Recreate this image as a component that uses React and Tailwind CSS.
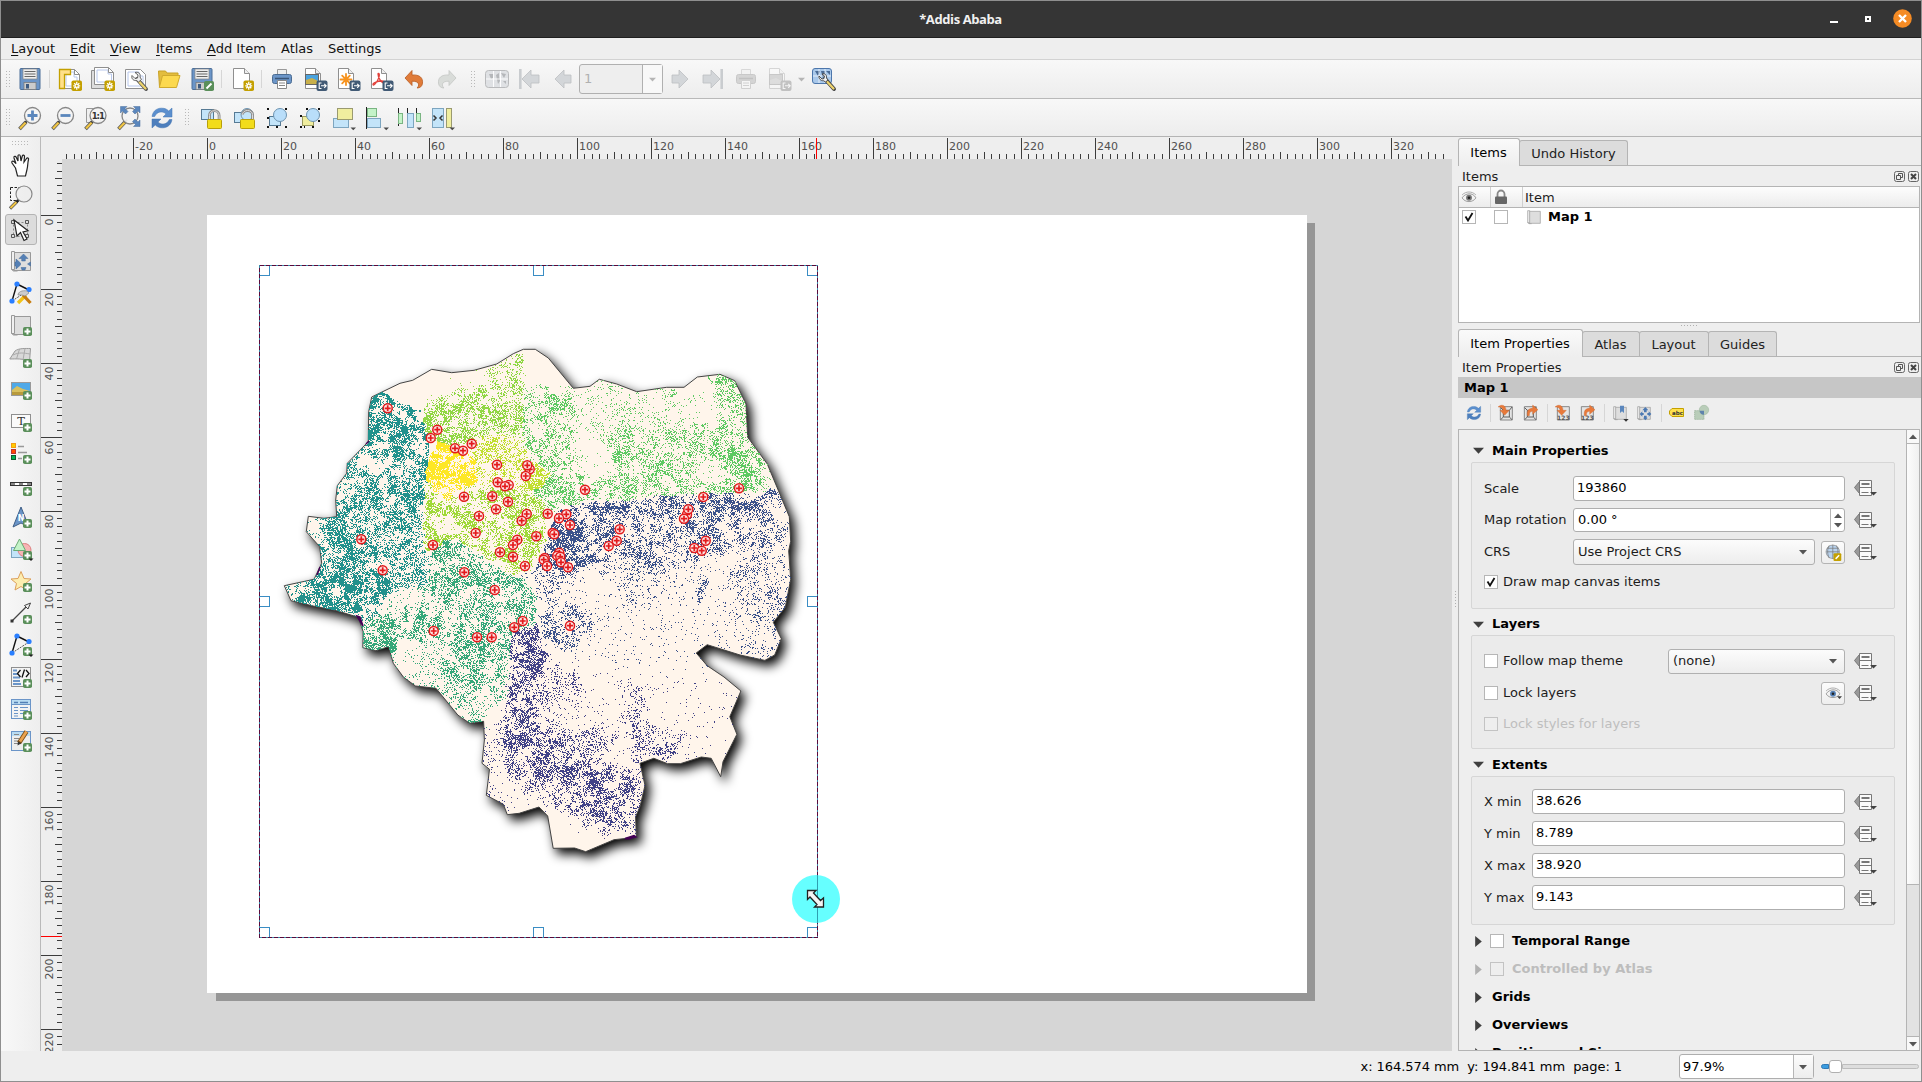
import React from "react";

/* ------------------------------------------------------------------ */
/* Map data                                                            */
/* ------------------------------------------------------------------ */

const OUTLINE = [
  [371.7, 397], [400, 383.3], [412.7, 380.3], [431.7, 369.3], [451.7, 372.7], [474, 370.3], [496.7, 364],
  [513.3, 353.7], [523.3, 349.3], [535.3, 349.3], [548.3, 358], [573.3, 388.3], [590, 386.3], [599.3, 379.3],
  [616.7, 384], [636.7, 391.7], [666.7, 387.3], [684, 387.3], [697.3, 377], [720, 374.3], [734.7, 380.7],
  [746, 404], [747.7, 437.3], [767.3, 464], [789.3, 516.7], [790.7, 541.3], [788.7, 550.7], [790.7, 579.3],
  [785.3, 607.3], [773.3, 622.3], [781.3, 638.7], [774.7, 655], [764.8, 660.4], [740, 655], [707.2, 644.7],
  [696.2, 653], [707.2, 665.7], [724, 677], [740.9, 691], [729.8, 716.7], [736.9, 734.3], [723, 761.7],
  [720.7, 776.7], [711.2, 758.3], [701.3, 757], [680.3, 763.7], [667.6, 763.7], [653.8, 758.3], [640, 763.3],
  [645, 785.3], [640, 806.7], [635.6, 816.7], [636.4, 837.3], [614, 839.7], [585.7, 851.7], [574.6, 848],
  [553.2, 848.3], [547.7, 816], [539, 807], [519.2, 813.3], [507.3, 814.7], [503.4, 804.3], [486.3, 795.3],
  [489.5, 769.3], [482, 763.3], [484.4, 740], [483.6, 721.3], [469.7, 723.3], [457.8, 715], [436, 688.3],
  [415.5, 686], [403.6, 677.3], [393.3, 663.3], [388.6, 646.7], [375.9, 650.7], [362.8, 647.7], [363.2, 631.7],
  [358.3, 617.3], [336.7, 610.7], [313.3, 606], [291, 600.7], [284.3, 585.7], [314, 579.3], [321.7, 563.3],
  [319.7, 546.7], [306.3, 531.7], [308.3, 516.3], [324, 518.3], [336.7, 516.7], [335.7, 500], [337.3, 485.7],
  [346.7, 473.3], [347.3, 463.3], [368.3, 441.7], [368.7, 411.7],
];

/* Each region: colour, boundary, and density blobs [cx, cy, rx, ry, density]. */
const REGIONS = [
  {
    color: "#fde725",
    poly: [[437, 440], [452, 444], [468, 452], [478, 470], [474, 484], [462, 492], [446, 500], [432, 490], [425, 474], [430, 455]],
    blobs: [[450, 468, 36, 38, 0.8]],
  },
  {
    color: "#c0df2f",
    poly: [[468, 440], [495, 432], [520, 440], [530, 462], [550, 472], [540, 488], [522, 492], [498, 482], [478, 484], [470, 455]],
    blobs: [[500, 462, 60, 34, 0.42], [535, 474, 20, 16, 0.6]],
  },
  {
    color: "#90d743",
    poly: [[424, 412], [440, 365], [500, 350], [523, 345], [523, 432], [528, 455], [520, 445], [495, 434], [470, 440], [452, 446], [436, 440], [424, 432]],
    blobs: [[445, 424, 38, 28, 0.58], [480, 419, 42, 30, 0.5], [510, 408, 26, 40, 0.48], [520, 360, 5, 9, 0.4]],
  },
  {
    color: "#9fd938",
    poly: [[424, 478], [446, 498], [474, 484], [522, 490], [546, 502], [543, 548], [527, 572], [512, 574], [492, 562], [470, 545], [445, 540], [432, 550], [422, 548]],
    blobs: [[438, 520, 26, 40, 0.58], [500, 525, 60, 45, 0.5], [470, 505, 35, 25, 0.42], [525, 555, 25, 25, 0.45]],
    holes: [[449, 526, 14, 10]],
  },
  {
    color: "#21918c",
    poly: [[345, 385], [378, 390], [400, 400], [424, 418], [430, 445], [426, 470], [431, 495], [421, 500], [422, 548], [431, 555], [426, 585], [388, 594], [378, 615], [352, 626], [270, 610], [270, 500]],
    blobs: [[378, 412, 26, 40, 0.75], [412, 440, 26, 45, 0.7], [400, 470, 44, 55, 0.55], [360, 490, 30, 50, 0.38], [350, 540, 34, 50, 0.58], [400, 530, 45, 50, 0.42], [345, 590, 50, 30, 0.75], [385, 570, 55, 40, 0.4], [316, 536, 18, 12, 0.22], [310, 592, 26, 12, 0.2]],
    holes: [[371, 460, 16, 10]],
  },
  {
    color: "#35a779",
    poly: [[431, 553], [446, 538], [466, 544], [490, 563], [512, 576], [530, 580], [540, 610], [532, 625], [512, 634], [502, 720], [484, 728], [455, 720], [380, 690], [355, 650], [355, 626], [378, 615], [390, 595], [425, 584]],
    blobs: [[460, 570, 55, 45, 0.48], [385, 635, 30, 26, 0.6], [500, 600, 50, 45, 0.45], [440, 610, 60, 40, 0.42], [480, 660, 45, 42, 0.45], [465, 685, 30, 26, 0.32], [420, 660, 26, 34, 0.15], [470, 720, 10, 8, 0.7]],
    holes: [[409, 655, 16, 20], [403, 600, 14, 10]],
  },
  {
    color: "#5ec962",
    poly: [[523, 385], [600, 380], [640, 370], [735, 370], [790, 460], [776, 490], [650, 497], [590, 500], [555, 510], [540, 500], [525, 485], [552, 472], [530, 460], [523, 432]],
    blobs: [[540, 420, 32, 36, 0.5], [555, 478, 30, 32, 0.5], [590, 492, 60, 14, 0.5], [650, 465, 56, 38, 0.42], [690, 465, 44, 38, 0.36], [740, 472, 26, 32, 0.5], [735, 420, 22, 48, 0.32], [605, 405, 40, 24, 0.1], [720, 376, 12, 4, 0.6], [665, 388, 14, 3, 0.5], [640, 430, 70, 36, 0.12]],
    holes: [[590, 460, 22, 18], [711, 474, 14, 12]],
  },
  {
    color: "#3b528b",
    poly: [[554, 511], [590, 501], [650, 497], [776, 490], [810, 520], [800, 680], [700, 680], [620, 668], [545, 646], [538, 610], [532, 582], [518, 576], [532, 570], [545, 548]],
    blobs: [[560, 540, 32, 40, 0.58], [600, 525, 55, 36, 0.52], [655, 530, 64, 40, 0.46], [705, 520, 50, 34, 0.4], [738, 507, 24, 12, 0.66], [768, 505, 12, 17, 0.58], [760, 540, 28, 30, 0.34], [650, 565, 54, 26, 0.16], [600, 555, 22, 12, 0.55], [702, 588, 4, 10, 0.6], [760, 590, 36, 36, 0.24], [562, 625, 26, 24, 0.38], [535, 580, 24, 16, 0.32], [650, 610, 200, 60, 0.045], [640, 590, 14, 16, 0.25], [770, 640, 26, 28, 0.12]],
  },
  {
    color: "#414287",
    poly: [[512, 634], [532, 612], [545, 646], [620, 668], [700, 680], [800, 680], [770, 800], [660, 870], [540, 870], [470, 800], [480, 724], [502, 720]],
    blobs: [[521, 650, 23, 55, 0.62], [522, 710, 25, 50, 0.55], [545, 758, 38, 36, 0.42], [555, 760, 24, 26, 0.5], [592, 788, 46, 32, 0.52], [605, 815, 28, 14, 0.42], [597, 748, 22, 22, 0.3], [637, 722, 17, 42, 0.22], [655, 745, 22, 14, 0.38], [495, 775, 22, 40, 0.1], [600, 720, 130, 70, 0.028], [632, 795, 16, 32, 0.28], [560, 695, 20, 24, 0.22]],
  },
];

const MARKERS = [
  [387.7, 408.3], [437.3, 429.7], [430.7, 438], [471.7, 443.7], [455, 448.3], [463, 450.7], [497, 464.7],
  [529.7, 469.3], [527.3, 465.3], [525.7, 476], [497.7, 482.3], [508.7, 485], [505, 486.3], [464, 496.7],
  [492.3, 496.3], [508, 501.7], [496, 509.3], [479, 516], [526.7, 514], [521.7, 520.7], [475.7, 533],
  [536.3, 536.3], [517.3, 539.7], [513, 545], [433, 545], [361.3, 539.3], [382.7, 570.3], [500, 552.3],
  [513, 556.7], [525, 566], [464.3, 572.3], [494.7, 590], [522.7, 621], [514.3, 627.3], [433.7, 631],
  [477, 637.3], [491.7, 637.3], [585, 489.7], [739, 488.3], [703.3, 497], [687, 514.5], [688.3, 509.3],
  [684, 518.7], [547.7, 513.7], [566.3, 514.3], [559, 518.3], [570, 525], [552.7, 533], [554.3, 534.3],
  [619.7, 529.3], [616.7, 540.7], [608.7, 546], [705.7, 540.7], [694.3, 548], [701.7, 550.7], [544.7, 558],
  [543.7, 559.7], [547, 566], [559.3, 552.7], [557.3, 555.7], [560.3, 556.7], [561, 562.3], [568, 567.3],
  [570, 625.7],
];

const inside = (x, y, poly) => {
  let hit = false;
  for (let i = 0, j = poly.length - 1; i < poly.length; j = i++) {
    const [xi, yi] = poly[i];
    const [xj, yj] = poly[j];
    if (yi > y !== yj > y && x < ((xj - xi) * (y - yi)) / (yj - yi) + xi) hit = !hit;
  }
  return hit;
};

const hash = (x, y) => {
  let h = Math.imul(x, 374761393) + Math.imul(y, 668265263);
  h = Math.imul(h ^ (h >>> 13), 1274126177);
  return ((h ^ (h >>> 16)) >>> 0) / 4294967296;
};

const noise = (x, y, s) => {
  const gx = Math.floor(x / s);
  const gy = Math.floor(y / s);
  const fx = x / s - gx;
  const fy = y / s - gy;
  const a = hash(gx, gy) * (1 - fx) + hash(gx + 1, gy) * fx;
  const b = hash(gx, gy + 1) * (1 - fx) + hash(gx + 1, gy + 1) * fx;
  return a * (1 - fy) + b * fy;
};

const buildDots = () => {
  const paths = REGIONS.map(() => []);
  for (let y = 349; y < 852; y++) {
    for (let x = 284; x < 792; x++) {
      if (!inside(x + 0.5, y + 0.5, OUTLINE)) continue;
      const px = x + (noise(x, y, 5) - 0.5) * 7;
      const py = y + (noise(x + 900, y, 5) - 0.5) * 7;
      const k = REGIONS.findIndex((r) => inside(px, py, r.poly));
      if (k < 0) continue;
      const region = REGIONS[k];
      const wx = x + (noise(x + 41, y + 19, 9) - 0.5) * 18;
      const wy = y + (noise(x + 530, y + 210, 9) - 0.5) * 18;
      let d = 0.005;
      for (const [cx, cy, rx, ry, v] of region.blobs) {
        const q = ((wx - cx) / rx) ** 2 + ((wy - cy) / ry) ** 2;
        if (q < 1.5) d = Math.max(d, v * Math.min(1, 1.1 * (1.5 - q)));
      }
      for (const [cx, cy, rx, ry] of region.holes || []) {
        if (((wx - cx) / rx) ** 2 + ((wy - cy) / ry) ** 2 < 1) d *= 0.15;
      }
      const n = noise(x, y, 3) * 0.5 + noise(x + 300, y + 77, 9) * 0.5;
      const f = Math.max(0.05, Math.min(1.7, (n - 0.26) * 3.4));
      if (hash(x * 3 + 11, y * 7 + 5) < d * f * 0.9) paths[k].push(`M${x} ${y}.5h1`);
    }
  }
  return paths.map((p) => p.join(""));
};

const DOT_PATHS = buildDots();
const OUTLINE_POINTS = OUTLINE.map((p) => p.join(",")).join(" ");
const HANDLES = [
  [259.5, 265.5], [533.5, 265.5], [807.5, 265.5], [259.5, 596.5], [807.5, 596.5], [259.5, 927.5], [533.5, 927.5], [807.5, 927.5],
];

/* ------------------------------------------------------------------ */
/* Icons                                                               */
/* ------------------------------------------------------------------ */

const Svg = ({ size = 24, children, className = "" }) => (
  <svg width={size} height={size} viewBox="0 0 24 24" fill="none" className={"shrink-0 overflow-visible " + className}>
    {children}
  </svg>
);

const Plus = () => (
  <g>
    <rect x="14" y="14" width="9" height="9" rx="1.8" fill="#5a8f5a" />
    <path d="M18.5 15.5v6M15.5 18.5h6" stroke="#fff" strokeWidth="2" />
  </g>
);
const Star = () => (
  <g>
    <rect x="13.5" y="13.5" width="10.5" height="10.5" rx="1.8" fill="#c4a000" />
    <path d="M18.75 14.8v8M15.2 18.8h7M16.2 16.2l5.1 5.1M21.3 16.2l-5.1 5.1" stroke="#fff" strokeWidth="1.3" />
    <circle cx="18.75" cy="18.75" r="1" fill="#c4a000" />
  </g>
);
const Export = ({ c = "#415a75" }) => (
  <g>
    <rect x="13.5" y="13.5" width="11" height="10.5" rx="2" fill={c} />
    <path d="M18.5 16h-2.3v5.5h2.3M18 18.8h5M21.2 16.8l2 2-2 2" stroke="#fff" strokeWidth="1.1" />
  </g>
);
const Arrow = () => <path d="M18.5 21.5h5.500l-2.750 2.750z" fill="#4a4a4a" />;
const Paper = ({ c = "#8f8f8f" }) => (
  <g>
    <path d="M2.5 1.5h10l5 5v15h-15z" fill="#fff" stroke={c} />
    <path d="M12.5 1.5v5h5" stroke={c} fill="#eee" />
  </g>
);
const Lens = ({ cx = 14.5, cy = 9.5 }) => (
  <g>
    <path d="M1.5 23l6.5-7" stroke="#555" strokeWidth="3.6" />
    <path d="M2 22.5l6-6.3" stroke="#f0c544" strokeWidth="2.2" />
    <path d="M7.5 16.5l2.5-2.8" stroke="#333" strokeWidth="2" />
    <circle cx={cx} cy={cy} r="8" fill="#f4f4f4" fillOpacity="0.92" stroke="#868686" strokeWidth="1.3" />
  </g>
);

const icons = {
  save: (
    <g>
      <path d="M2.5 1.5h18a1 1 0 011 1v19a1 1 0 01-1 1h-18a1 1 0 01-1-1v-19a1 1 0 011-1z" transform="translate(.5)" fill="#6b95c8" stroke="#4d6f98" />
      <rect x="5" y="2" width="14" height="10" fill="#eee" stroke="#888" strokeWidth=".7" />
      <path d="M6.500 4.500h11M6.500 7h11M6.500 9.500h11" stroke="#666" />
      <rect x="6" y="15.500" width="12" height="7" fill="#ccc" stroke="#777" strokeWidth=".7" />
      <rect x="8" y="17" width="3" height="4.500" fill="#3d5a80" />
    </g>
  ),
  newLayout: (
    <g>
      <path d="M3.500 2.500h13l5 5v14h-18z" fill="#fff" stroke="#8f8f8f" />
      <path d="M8 5h8v5h3v9H8z" stroke="#b8c8ec" />
      <path d="M1.500 2.500h11v5h-6v14h-5z" fill="#ffe08a" stroke="#c4a000" strokeWidth="1.300" />
      <path d="M16.500 2.500v5h5" stroke="#8f8f8f" />
      <Star />
    </g>
  ),
  duplicate: (
    <g>
      <path d="M.5 3.500h16v18H.5z" fill="#ddd" stroke="#8f8f8f" />
      <path d="M3.500.5h14l5 5v12h-19z" fill="#fff" stroke="#8f8f8f" />
      <path d="M6 3h11v4h3.500v8H6z" stroke="#b8c8ec" />
      <path d="M17.500.5v5h5" stroke="#8f8f8f" />
      <Star />
    </g>
  ),
  manager: (
    <g>
      <path d="M1.500 2.500h15l5 5v14h-20z" fill="#fff" stroke="#8f8f8f" />
      <path d="M4 5h11v4h4v10H4z" stroke="#b8c8ec" />
      <path d="M13 12l9 10" stroke="#555" strokeWidth="4" strokeLinecap="round" />
      <path d="M15 14.500l6.500 7" stroke="#edd36c" strokeWidth="2.300" strokeLinecap="round" />
      <path d="M8 8.500l3 3 2.500-.5.5-3-3-2.500c3-1 6 1 5 4.500l1.500 2.500-3 2.500-2-1.500c-3 .5-5.500-2-4.500-5z" fill="#eee" stroke="#555" strokeWidth=".9" />
    </g>
  ),
  folder: (
    <g>
      <path d="M1.500 4h7l1.500 2h11v5l-4 9H2.500z" fill="#e3bd3e" stroke="#c9a227" />
      <path d="M5.500 8.500h17.500l-3.500 12H2.300z" fill="#fcd94f" stroke="#d0aa2e" />
    </g>
  ),
  page: (
    <g>
      <path d="M3.500 1.500h11l5 5v15h-16z" fill="#fff" stroke="#8f8f8f" />
      <path d="M14.500 1.500v5h5" stroke="#8f8f8f" fill="#eee" />
      <Star />
    </g>
  ),
  print: (
    <g>
      <path d="M7.500 2.500h9v6h-9z" fill="#eee" stroke="#999" />
      <rect x="2.500" y="7.500" width="19" height="9" rx="2" fill="#6b95c8" stroke="#4b6c92" />
      <path d="M5 11.500h14" stroke="#3a5577" strokeWidth="1.500" />
      <path d="M7.500 13.500h9v8h-9z" fill="#fff" stroke="#888" />
      <path d="M9 16h6M9 18.500h6" stroke="#888" />
    </g>
  ),
  exportImg: (
    <g>
      <Paper />
      <rect x="2.500" y="7.500" width="13" height="10" fill="#4aa3df" stroke="#666" />
      <path d="M3 13l6-2 6 3v3H3z" fill="#c9b04a" />
      <Export />
    </g>
  ),
  exportSvg: (
    <g>
      <Paper />
      <path d="M10 7v11M4.500 12.500h11M6.200 8.700l7.600 7.600M13.800 8.700l-7.600 7.600" stroke="#f7931e" strokeWidth="1.800" strokeLinecap="round" />
      <Export />
    </g>
  ),
  exportPdf: (
    <g>
      <Paper />
      <path d="M9.500 6.500c1.500 0 .8 4-1 7C6.500 17 4.500 19 4 17.500c-.3-1.500 5-3.500 8.500-3.500s4 2 2.500 2c-2.500 0-6-5.500-6-9 0-.5 0-.5.500-.5z" stroke="#e2403a" strokeWidth="1.300" />
      <Export />
    </g>
  ),
  undo: (
    <path d="M3 11l7-7.500V8c8-.5 11 3 10.500 8-.3 3.500-2.500 5-5.500 5 2.500-2 3-7-5-6.800V18.500z" fill="#e07b39" stroke="#b85c22" strokeWidth=".8" />
  ),
  redo: (
    <path d="M21 11l-7-7.500V8C6 7.500 3 11 3.500 16c.3 3.500 2.500 5 5.500 5-2.500-2-3-7 5-6.800V18.500z" fill="#d9dcd9" stroke="#c4c7c4" strokeWidth=".8" />
  ),
  atlas: (
    <g>
      <rect x=".5" y="3.500" width="23" height="17" rx="3" fill="#dfe1e4" stroke="#b9babc" />
      <path d="M4 7h5l-1 4-2 1zM11 8l3-2v4l1 4-2 3zM16 6l5 1-2 4zM18 14h3v3z" fill="#b5b7ba" />
      <path d="M8.500 4v16M15.500 4v16M1 12h22" stroke="#fff" strokeWidth=".9" />
    </g>
  ),
  first: (
    <g>
      <rect x="2" y="2" width="2.600" height="20" fill="#c9cccf" />
      <path d="M5 12l9-9v5h8v8h-8v5z" fill="#d3d6d9" stroke="#bcbfc2" strokeWidth=".8" />
    </g>
  ),
  prev: <path d="M4 12l9-9v5h7v8h-7v5z" fill="#d3d6d9" stroke="#bcbfc2" strokeWidth=".8" />,
  next: <path d="M20 12l-9-9v5H4v8h7v5z" fill="#d3d6d9" stroke="#bcbfc2" strokeWidth=".8" />,
  last: (
    <g>
      <rect x="19.400" y="2" width="2.600" height="20" fill="#c9cccf" />
      <path d="M19 12l-9-9v5H2v8h8v5z" fill="#d3d6d9" stroke="#bcbfc2" strokeWidth=".8" />
    </g>
  ),
  atlasSettings: (
    <g>
      <rect x=".5" y="1.500" width="19" height="15" rx="2.500" fill="#a9c8ea" stroke="#4c76ab" />
      <path d="M3 4h5l-2 5zM9 4h4v5l-2 3zM14 4h4v4z" fill="#4a6a94" />
      <path d="M7 2v14M13 2v14M1 9h18" stroke="#fff" strokeWidth=".7" />
      <path d="M14 13l8 9" stroke="#444" strokeWidth="4" strokeLinecap="round" />
      <path d="M15.500 15l6 6.500" stroke="#edd36c" strokeWidth="2.300" strokeLinecap="round" />
      <path d="M7 9l3 3 2-.5.5-2.500-2.500-2c3-1 5 1 4.500 4l1.500 2-2.500 2-2-1.300c-2.500.3-5-2-4.500-4.700z" fill="#eee" stroke="#444" strokeWidth=".9" />
    </g>
  ),
  zoomIn: (
    <g>
      <Lens />
      <path d="M14.500 4.500v10M9.500 9.500h10" stroke="#5b87bd" strokeWidth="2.800" />
    </g>
  ),
  zoomOut: (
    <g>
      <Lens />
      <path d="M9.500 9.500h10" stroke="#5b87bd" strokeWidth="2.800" />
    </g>
  ),
  zoomActual: (
    <g>
      <path d="M2.500 2.500h14v14h-14z" fill="#f0f0f0" stroke="#999" />
      <Lens cx={14} />
      <text x="13.800" y="12.500" fontSize="8.500" letterSpacing="-1" fontWeight="700" fill="#333" textAnchor="middle" fontFamily="DejaVu Sans">1:1</text>
    </g>
  ),
  zoomFull: (
    <g>
      <Lens cx={13} cy={10} />
      <g fill="#5b87bd" stroke="#4a6f9c" strokeWidth=".5">
        <path d="M3.500.5H10L8 2.500l3 3L8.500 8l-3-3-2 2z" />
        <path d="M23 .5h-6.500l2 2-3 3L18 8l3-3 2 2z" />
        <path d="M23 20.500h-6.500l2-2-3-3L18 13l3 3 2-2z" />
      </g>
    </g>
  ),
  refresh: (
    <g>
      <path d="M2 10.500C3 4 8 1.500 13.500 2.300c2 .3 4 1.300 5.200 2.700L22 2v9h-9l3-3c-3-3-8-2.500-10 .5-.5.800-1 1.300-1.300 2z" fill="#5b8fce" stroke="#4375b0" strokeWidth=".5" />
      <path d="M22 13.500C21 20 16 22.500 10.500 21.700c-2-.3-4-1.300-5.200-2.700L2 22v-9h9l-3 3c3 3 8 2.500 10-.5.500-.800 1-1.300 1.300-2z" fill="#4d7fbd" stroke="#4375b0" strokeWidth=".5" />
    </g>
  ),
  lock: (
    <g>
      <rect x="2.500" y="3.500" width="12" height="10" fill="#c3e4f9" stroke="#567a94" />
      <path d="M10.500 13V9.500a4.800 4.800 0 019.600 0V13" stroke="#8a8a8a" strokeWidth="2.800" />
      <path d="M10.500 13V9.500a4.800 4.800 0 019.600 0V13" stroke="#ddd" strokeWidth="1" />
      <rect x="8.500" y="13.500" width="14" height="9" rx="1" fill="#f2dc1b" stroke="#b89f0c" />
    </g>
  ),
  unlock: (
    <g>
      <rect x="2.500" y="6.500" width="11" height="10" fill="#c3e4f9" stroke="#567a94" />
      <circle cx="15" cy="8.500" r="6" fill="#c3e4f9" stroke="#6d93b0" />
      <path d="M10.500 8.500a5 4 0 0110 0V13" stroke="#8a8a8a" strokeWidth="2.800" />
      <path d="M10.500 8.500a5 4 0 0110 0V13" stroke="#ddd" strokeWidth="1" />
      <rect x="8.500" y="13.500" width="14" height="9" rx="1" fill="#f2dc1b" stroke="#b89f0c" />
    </g>
  ),
  group: (
    <g>
      <rect x="4.500" y="10.500" width="11" height="9" fill="#c3e4f9" stroke="#567a94" />
      <circle cx="15" cy="9" r="6.500" fill="#b9defa" stroke="#6d93b0" />
      <path d="M2 3h2M2 12h2M2 21h2M20 3h2M20 21h2M11 21h2" stroke="#111" strokeWidth="2" />
    </g>
  ),
  ungroup: (
    <g>
      <rect x="4.500" y="10.500" width="11" height="9" fill="#f0ee9f" stroke="#9a9a60" />
      <circle cx="15" cy="9" r="6.500" fill="#b9defa" stroke="#6d93b0" />
      <path d="M8 3h2M2 10h2M2 21h2M20 3h2M20 15h2M14 21h2M6 21h1" stroke="#111" strokeWidth="2" />
    </g>
  ),
  raise: (
    <g>
      <rect x="1.500" y="12.500" width="15" height="9" fill="#c3e4f9" stroke="#7da5bf" />
      <rect x="5.500" y="2.500" width="15" height="11" fill="#f0ee9f" stroke="#9a9a70" />
      <Arrow />
    </g>
  ),
  align: (
    <g>
      <path d="M1.500 1v22" stroke="#222" />
      <rect x="2.500" y="2.500" width="9" height="8" fill="#c4f3c8" stroke="#7ab582" />
      <rect x="2.500" y="12.500" width="13" height="9" fill="#c3e4f9" stroke="#7da5bf" />
      <Arrow />
    </g>
  ),
  distribute: (
    <g>
      <path d="M.5 2v18M9.500 2v5M18.500 2v14" stroke="#222" />
      <rect x=".5" y="7.500" width="4" height="10" fill="#c4f3c8" stroke="#7ab582" />
      <rect x="9.500" y="7.500" width="6" height="14" fill="#c3e4f9" stroke="#7da5bf" />
      <rect x="18.500" y="7.500" width="4" height="8" fill="#c4f3c8" stroke="#7ab582" />
      <Arrow />
    </g>
  ),
  resize: (
    <g>
      <rect x="1.500" y="2.500" width="11" height="19" fill="#c3e4f9" stroke="#7da5bf" />
      <rect x="15.500" y="2.500" width="5" height="19" fill="#f0ee9f" stroke="#9a9a70" />
      <path d="M2.500 9.500l2.500 2.500-2.500 2.500M11.500 9.500L9 12l2.500 2.500" stroke="#333" strokeWidth="1.500" />
      <Arrow />
    </g>
  ),
  hand: (
    <path d="M6.500 15L3 10c-.8-1.500.8-2.500 2-1.300l2 2L5 5c-.5-1.700 1.500-2.300 2.200-.8L9 8V3c0-1.700 2-1.700 2.300 0L12 8l1.300-5c.5-1.500 2.300-1 2.200.5L15 9l2.500-3.500c1-1.200 2.500-.4 2 1C18.500 10 19 13 18 16.500L16.500 23h-8z" fill="#fff" stroke="#222" strokeWidth="1.200" />
  ),
  zoomTool: (
    <g>
      <path d="M1.500 2.500h12M1.500 2.500v13h12" stroke="#222" strokeDasharray="2.500 1.500" />
      <path d="M1 23.500l7-7" stroke="#555" strokeWidth="3.200" />
      <path d="M1.500 23l6-6" stroke="#f0c544" strokeWidth="2" />
      <path d="M7.500 17l2-2" stroke="#222" strokeWidth="2.600" />
      <circle cx="15" cy="9" r="8" fill="#eee" fillOpacity=".93" stroke="#888" strokeWidth="1.200" />
    </g>
  ),
  select: (
    <g>
      <path d="M4.500 4.500h14v14h-14z" stroke="#888" strokeDasharray="2 2" />
      <path d="M2.500 2.500h3v3h-3zM16.500 2.500h3v3h-3zM2.500 16.500h3v3h-3zM16.500 16.500h3v3h-3z" fill="#ddd" stroke="#555" />
      <path d="M5 2l3 16 3.500-3.500L15 22.500l3-1.500-4-7 5-1.200z" fill="#fff" stroke="#222" strokeWidth="1.200" />
    </g>
  ),
  map: (
    <g>
      <path d="M4.500 3.500h17v18h-17z" fill="#dedede" stroke="#999" />
      <path d="M2.500 2.500h3v18h-3z" fill="#f0f0f0" stroke="#999" />
      <path d="M2.500 20.500l2 1.500h4" stroke="#999" />
    </g>
  ),
  moveArrows: (
    <path d="M14.500 5l4.500 4.500h-2.700v2.500h-3.600V9.500H10zM7 10l4.500 4v2L7 20v-3H6v-4h1zM21.500 13l-3 2 3 2zM12 18.500h5l-1 2.500h-3z" fill="#5580b5" stroke="#41689a" strokeWidth=".5" />
  ),
  nodes: (
    <g>
      <path d="M8 3L20 9M8 3L3 20" stroke="#111" strokeWidth="1.400" />
      <path d="M20 9L3 20" stroke="#555" strokeDasharray="2 1" />
      <circle cx="8" cy="3" r="2.600" fill="#2a7fff" />
      <circle cx="20" cy="8.500" r="2.600" fill="#2a7fff" />
      <circle cx="3" cy="20" r="2.600" fill="#2a7fff" />
    </g>
  ),
  tools: (
    <g>
      <path d="M9 22l8-8" stroke="#f2c418" strokeWidth="3.400" />
      <path d="M14 14l7.500 8" stroke="#c77c0e" strokeWidth="3.200" />
      <path d="M9 14c0-3 4-5 9-4l2 2-4 3-3-1z" fill="#ccc" stroke="#888" strokeWidth=".7" />
    </g>
  ),
  map3d: (
    <g>
      <path d="M6 6c4-3 10-2.500 15.500-2.500L20.500 17C14 13 7 14 .8 14z" fill="#d8d8d8" stroke="#999" />
      <path d="M4 10c6-3 11-2 17-1M10.500 4l-3 10M16 3.500L14 15" stroke="#aaa" />
    </g>
  ),
  picture: (
    <g>
      <rect x="2.500" y="5.500" width="19" height="13" fill="#4fa9e8" stroke="#999" />
      <path d="M3 13l5-4 6 3 7 2v4H3z" fill="#d8c05e" />
      <path d="M3 15h18v3H3z" fill="#b89a3c" />
    </g>
  ),
  label: (
    <g>
      <rect x="2.500" y="5.500" width="19" height="13" fill="#fafafa" stroke="#8f8f8f" />
      <text x="12" y="16" fontSize="11.500" fill="#333" textAnchor="middle" fontFamily="DejaVu Serif, serif">T</text>
    </g>
  ),
  legend: (
    <g>
      <rect x="2.500" y="2.500" width="4" height="4" fill="#fc0" stroke="#f39c12" />
      <rect x="2.500" y="8.500" width="4" height="4" fill="#ff4800" stroke="#b33" />
      <rect x="2.500" y="14.500" width="4" height="4" fill="#00b050" stroke="#0b5a30" />
      <path d="M9 5.500h6M9 11.500h9M9 17.500h4" stroke="#999" strokeWidth="1.600" />
    </g>
  ),
  scalebar: (
    <g>
      <rect x="1.500" y="9.500" width="21" height="3" fill="#888" stroke="#333" />
      <path d="M6 11h4M14 11h4" stroke="#fff" strokeWidth="2" />
    </g>
  ),
  north: (
    <g>
      <path d="M12 2l8 20-8-4-8 4z" fill="#6b95c8" stroke="#3f5f86" />
      <text x="12" y="16" fontSize="8" fontWeight="700" fill="#fff" textAnchor="middle" fontFamily="DejaVu Sans">N</text>
    </g>
  ),
  shape: (
    <g>
      <rect x="2.500" y="10.500" width="13" height="10" fill="#c3e4f9" stroke="#7da5bf" />
      <circle cx="15.500" cy="13" r="6.500" fill="#f7b5b5" stroke="#dd7f7f" />
      <path d="M10.500 2l6 11.500h-12z" fill="#c4f3c8" stroke="#6bab74" />
    </g>
  ),
  marker: <path d="M12 2.500l3 7 7 .5-5.500 4.500L18 21l-6-3.500L6 21l1.500-6.500L2 10l7-.5z" fill="#fdeeb0" stroke="#dc9f5a" />,
  arrow: (
    <g>
      <path d="M3 20L18 5" stroke="#444" strokeWidth="1.200" />
      <path d="M21.500 2l-6 2.500 3.500 3.500z" fill="#eee" stroke="#444" />
      <rect x="1.500" y="18.500" width="3" height="3" fill="#333" />
    </g>
  ),
  html: (
    <g>
      <rect x="2.500" y="2.500" width="19" height="19" fill="#f4f4f4" stroke="#8f8f8f" />
      <path d="M4 5.500h4M4 9h5M4 12.500h7M4 16h7M4 19h8" stroke="#6b95c8" strokeWidth="1.800" />
      <path d="M11.500 5l-3 3.500 3 3.500M17 5l3 3.500-3 3.500M15.500 4.500l-2.500 8" stroke="#111" strokeWidth="1.300" />
    </g>
  ),
  table: (
    <g>
      <rect x="2.500" y="2.500" width="19" height="19" fill="#f4f4f4" stroke="#6b95c8" />
      <path d="M3 3h18v4H3z" fill="#b9dcf3" />
      <path d="M5 5.500h4M11 5.500h8" stroke="#5580b5" strokeWidth="1.400" />
      <path d="M2.500 7.500h19" stroke="#6b95c8" />
      <path d="M5 10.500h4M11 10.500h8M5 13.500h4M11 13.500h8M5 16.500h4M11 16.500h4M5 19h4" stroke="#6b95c8" />
    </g>
  ),
  manual: (
    <g>
      <rect x="2.500" y="2.500" width="19" height="19" fill="#eee" stroke="#6b95c8" />
      <path d="M3 3h18v4H3z" fill="#b9dcf3" />
      <path d="M5 5.500h5M5 9.500h5M5 12h4M5 14.500h4" stroke="#888" />
      <path d="M17.500 2.500L10 14" stroke="#7a4c14" strokeWidth="4.500" />
      <path d="M17.500 2.500L11 12.500" stroke="#e9a24f" strokeWidth="2.800" />
      <path d="M8.500 16.500l.5-4 3 2z" fill="#333" />
    </g>
  ),
};

const Icon = ({ name, size, plus, arrow, className }) => (
  <Svg size={size} className={className}>
    {icons[name]}
    {plus && <Plus />}
    {arrow && <path d="M19.500 21.500h5l-2.500 2.500z" fill="#222" />}
  </Svg>
);

const Slot = ({ children, className = "w-[33px]" }) => (
  <div className={"flex shrink-0 items-center justify-center " + className}>{children}</div>
);

const GripV = ({ className = "" }) => (
  <div className={"flex shrink-0 items-center justify-center " + className}>
    <svg width="6" height="17" viewBox="0 0 6 17" shapeRendering="crispEdges">
      <path d="M1.500 0v17M4.500 0v17" stroke="#b9b9b9" strokeDasharray="1 2" />
    </svg>
  </div>
);

const Sep = ({ className = "" }) => (
  <div className={"flex shrink-0 items-center justify-center " + className}>
    <div className="h-[18px] w-px bg-[#d6d6d6]" />
  </div>
);

/* ------------------------------------------------------------------ */
/* Rulers                                                              */
/* ------------------------------------------------------------------ */

const STEP = 3.7;
const hTicks = [];
for (let mm = -38; mm <= 334; mm += 2) hTicks.push([mm, Math.floor(207.4 + mm * STEP) + 0.5]);
const vTicks = [];
for (let mm = -14; mm <= 224; mm += 2) vTicks.push([mm, Math.floor(215.4 + mm * STEP) + 0.5]);

const HRuler = () => (
  <svg width="1411" height="22" viewBox="41 137 1411 22" className="block shrink-0 bg-[#eeeeee]">
    <path
      shapeRendering="crispEdges"
      stroke="#3c3c3c"
      d={hTicks.map(([mm, x]) => `M${x} 159V${mm % 20 === 0 ? 138 : mm % 10 === 0 ? 152 : 154}`).join("")}
    />
    {hTicks.filter(([mm]) => mm % 20 === 0).map(([mm, x]) => (
      <text key={mm} x={x + 1.5} y="150" fontSize="11" fill="#505050" className="font-['DejaVu_Sans']">{mm}</text>
    ))}
    <path d="M816.500 138v21" stroke="#ff0000" shapeRendering="crispEdges" />
  </svg>
);

const VRuler = () => (
  <svg width="21" height="892" viewBox="41 159 21 892" className="block shrink-0 bg-[#eeeeee]">
    <path
      shapeRendering="crispEdges"
      stroke="#3c3c3c"
      d={vTicks.map(([mm, y]) => `M62 ${y}H${mm % 20 === 0 ? 41 : mm % 10 === 0 ? 55 : 57}`).join("")}
    />
    {vTicks.filter(([mm]) => mm % 20 === 0).map(([mm, y]) => (
      <text
        key={mm}
        fontSize="11"
        fill="#505050"
        textAnchor="end"
        transform={`translate(53 ${y + 3}) rotate(-90)`}
        className="font-['DejaVu_Sans']"
      >
        {mm}
      </text>
    ))}
    <path d="M41 936.500h21" stroke="#ff0000" shapeRendering="crispEdges" />
  </svg>
);

/* ------------------------------------------------------------------ */
/* Map canvas                                                          */
/* ------------------------------------------------------------------ */

const MapDrawing = () => (
  <svg width="1390" height="892" viewBox="62 159 1390 892" className="absolute inset-0">
    <defs>
      <filter id="shadow" x="-10%" y="-10%" width="120%" height="120%">
        <feGaussianBlur stdDeviation="5.500" />
      </filter>
    </defs>
    <polygon points={OUTLINE_POINTS} transform="translate(4.500 5.500)" fill="#000" stroke="#000" strokeWidth="1" filter="url(#shadow)" />
    <polygon points={OUTLINE_POINTS} fill="#fff5eb" stroke="#444" strokeWidth="1" />
    <g shapeRendering="crispEdges">
      {DOT_PATHS.map((d, i) => (
        <path key={i} d={d} stroke={REGIONS[i].color} />
      ))}
    </g>
    <path d="M625 838.500l9-3 2 1.500-8 2zM357 616l3 1 3 9zM366 444l3-3M320 567l-3 8" fill="#440154" stroke="#440154" strokeWidth="1.500" />
    {MARKERS.map(([x, y], i) => (
      <g key={i} transform={`translate(${x} ${y})`}>
        <circle r="4.500" fill="#fbe3e0" stroke="#e31a1c" strokeWidth="1.500" />
        <path d="M-3 0h6M0-3v6" stroke="#e31a1c" strokeWidth="1.700" />
      </g>
    ))}
    <g shapeRendering="crispEdges">
      {HANDLES.map(([x, y]) => (
        <rect key={x + "-" + y} x={x} y={y} width="10" height="10" fill="#fff" stroke="#3a8dc4" />
      ))}
      <rect x="259.500" y="265.500" width="558" height="672" fill="none" stroke="#3a8aa8" />
      <rect x="259.500" y="265.500" width="558" height="672" fill="none" stroke="#5a0a3c" strokeDasharray="4 2" />
    </g>
    <circle cx="816" cy="899" r="24" fill="#66ffff" />
    <path d="M817.500 875v48" stroke="#2f9fb0" shapeRendering="crispEdges" />
    <path
      d="M807.500 890.500h8.500l-2.500 2.500 7 7.500 3-2.500v9h-9l2.500-2.500-7-7.500-2.500 2.500z"
      fill="#f4f4f4"
      stroke="#222"
      strokeWidth="1.300"
    />
  </svg>
);

const Canvas = () => (
  <div className="relative h-[892px] w-[1390px] overflow-hidden bg-[#d6d6d6]">
    <div className="absolute top-[64px] left-[154px] h-[778px] w-[1099px] bg-[#969696]" />
    <div className="absolute top-[56px] left-[145px] h-[778px] w-[1100px] bg-white" />
    <MapDrawing />
  </div>
);

/* ------------------------------------------------------------------ */
/* Controls                                                            */
/* ------------------------------------------------------------------ */

const Tri = ({ dir = "down", color = "#3f3f3f", size = 5 }) => {
  const d = { down: "M0 2.500h10L5 8z", up: "M0 7.500h10L5 2z", right: "M2 0v10l6-5z" }[dir];
  return (
    <svg width={size * 2} height={size * 2} viewBox="0 0 10 10" className="block shrink-0">
      <path d={d} fill={color} />
    </svg>
  );
};

const Check = ({ checked, disabled, className = "" }) => (
  <div className={"flex h-[14px] w-[14px] shrink-0 items-center justify-center border " + (disabled ? "border-[#c3c3c3] bg-[#eeeeee] " : "border-[#b6b6b6] bg-white ") + className}>
    {checked && (
      <svg width="10" height="10" viewBox="0 0 10 10" fill="none">
        <path d="M1.500 4.500l2.500 4L8.500 1" stroke="#111" strokeWidth="1.800" />
      </svg>
    )}
  </div>
);

const Override = ({ className = "" }) => (
  <svg width="24" height="18" viewBox="0 0 24 18" fill="none" className={"shrink-0 " + className}>
    <path d="M5.500 2.500v12L.5 8.500z" fill="#999" stroke="#777" />
    <path d="M5.500 1.500h12v15h-12z" fill="#fafafa" stroke="#777" />
    <path d="M7.500 5h8" stroke="#555" strokeWidth="1.600" />
    <path d="M5.500 8.500h12M7.500 13.500h7" stroke="#777" />
    <path d="M16 13h7l-3.500 3.500z" fill="#444" />
  </svg>
);

const Field = ({ children, className = "" }) => (
  <div className={"flex shrink-0 items-center rounded-[3px] border border-[#aeaeae] bg-white pl-[3px] text-black " + className}>
    <span className="-mt-px">{children}</span>
  </div>
);

const Combo = ({ children, className = "" }) => (
  <div className={"flex shrink-0 items-center justify-between rounded-[3px] border border-[#b0b0b0] bg-linear-to-b from-[#fcfcfc] to-[#ededed] pr-[7px] pl-1 " + className}>
    <span>{children}</span>
    <Tri size={4} color="#555" />
  </div>
);

const SmallButton = ({ children }) => (
  <div className="flex h-[23px] w-[24px] shrink-0 items-center justify-center rounded-[3px] border border-[#b4b4b4] bg-linear-to-b from-[#fcfcfc] to-[#eeeeee]">
    {children}
  </div>
);

const Section = ({ title, height, header = "h-[27px]", children }) => (
  <section>
    <div className={"flex items-center pt-1 pl-[14px] font-bold text-black " + header}>
      <Tri size={5.5} />
      <span className="ml-[8px]">{title}</span>
    </div>
    <div className={"ml-[12px] w-[424px] rounded-[2px] border border-[#d6d6d6] bg-[#ebebeb] " + height}>{children}</div>
  </section>
);

const Collapsed = ({ title, check, disabled }) => (
  <div className={"flex h-[28px] items-center pl-[14px] font-bold " + (disabled ? "text-[#bdbdbd]" : "text-black")}>
    <Tri dir="right" size={5.5} color={disabled ? "#b0b0b0" : "#3f3f3f"} />
    {check && <Check disabled={disabled} className="ml-[6px]" />}
    <span className="ml-[8px]">{title}</span>
  </div>
);

const Tab = ({ active, children, className = "" }) => (
  <div
    className={
      "box-border flex shrink-0 items-center justify-center rounded-t-[3px] border border-b-0 border-[#b4b4b4] " +
      (active ? "z-10 -mb-px h-[28px] bg-linear-to-b from-[#fafafa] to-[#eeeeee] pt-px text-black " : "h-[25px] -ml-px bg-[#dcdcdc] pt-0.5 text-[#222] ") +
      className
    }
  >
    {children}
  </div>
);

const DockTitle = ({ children, className = "" }) => (
  <div className={"flex items-center justify-between pr-[2px] pl-1 " + className}>
    <span>{children}</span>
    <div className="flex gap-[3px]">
      <svg width="11" height="11" viewBox="0 0 11 11" fill="none">
        <rect x=".5" y=".5" width="10" height="10" rx="2" stroke="#666" />
        <path d="M4.500 4.500v-2h4v4h-2M2.500 4.500h4v4h-4z" stroke="#555" />
      </svg>
      <svg width="11" height="11" viewBox="0 0 11 11" fill="none">
        <rect x=".5" y=".5" width="10" height="10" rx="2" stroke="#666" />
        <path d="M3 3l5 5M8 3L3 8" stroke="#444" strokeWidth="2" />
      </svg>
    </div>
  </div>
);

const Eye = ({ iris = "#777", size = 16 }) => (
  <svg width={size} height={size * 0.8} viewBox="0 0 16 13" fill="none">
    <path d="M1 7c3-5 11-6 14 0-3 5-11 5-14 0z" fill="#f2f2f2" stroke="#888" strokeWidth=".8" />
    <path d="M1 4c4-4 10-4 14 0" stroke="#999" strokeWidth=".8" />
    <circle cx="8" cy="6.800" r="3" fill={iris} />
    <circle cx="8" cy="6.800" r="1.300" fill="#222" />
  </svg>
);

const OrangeArrow = ({ back }) =>
  back ? (
    <path d="M0 3C5-2 12 0 12 8h5l-7 7.500L3 8h4.500c0-3-2-5-7.500-5z" fill="#e8793a" stroke="#c1622a" strokeWidth=".5" />
  ) : (
    <path d="M8 16c-1-8 2-11 8-11V0l8 7-8 7V9.500c-4 0-5 2-5 6.500z" fill="#e8793a" stroke="#c1622a" strokeWidth=".5" />
  );

const PropIcon = ({ back, numbers }) => (
  <Svg size={16}>
    <path d="M3.500 2.500h18v20h-18z" fill="#e4e4e4" stroke="#888" strokeWidth="1.500" />
    {numbers ? (
      <text x="12.500" y="22" fontSize="9" fontWeight="700" fill="#555" textAnchor="middle" fontFamily="DejaVu Sans">123</text>
    ) : (
      <path d="M4 4l4 4M21 3l-4 5M4 22l4-4M21 22l-4-4M8 8h9v10H8z" stroke="#555" strokeWidth="1.400" />
    )}
    <OrangeArrow back={back} />
  </Svg>
);

/* ------------------------------------------------------------------ */
/* Window regions                                                      */
/* ------------------------------------------------------------------ */

const TitleBar = () => (
  <header className="relative flex h-[38px] items-center justify-center border-t border-b border-t-[#8f8f8f] border-b-[#1f1f1f] bg-[#353535]">
    <span className="-ml-px font-['Open_Sans'] text-[13px] font-bold tracking-[-0.400px] text-[#f0f0f0]">*Addis Ababa</span>
    <div className="absolute top-[8px] right-[9px] flex items-center">
      <div className="mt-[6px] mr-[27px] h-[2px] w-[8px] bg-white" />
      <div className="mr-[22px] h-[6px] w-[6px] border-2 border-white bg-[#353535]" />
      <svg width="19" height="19" viewBox="0 0 19 19">
        <circle cx="9.500" cy="9.500" r="9.300" fill="#f58b24" />
        <path d="M6 6l7 7M13 6l-7 7" stroke="#fff" strokeWidth="2.400" />
      </svg>
    </div>
  </header>
);

const MENUS = [
  ["L", "ayout", "w-[59px]"],
  ["E", "dit", "w-[40px]"],
  ["V", "iew", "w-[46px]"],
  ["I", "tems", "w-[51px]"],
  ["A", "dd Item", "w-[74px]"],
  ["", "Atlas", "w-[47px]"],
  ["", "Settings", "w-[60px]"],
];

const MenuBar = () => (
  <nav className="flex h-[22px] items-center border-b border-[#d2d2d2] bg-[#eeeeee] pl-[10px]">
    {MENUS.map(([u, rest, w]) => (
      <span key={rest} className={"shrink-0 text-[#111] " + w}>
        <span className="underline underline-offset-2">{u}</span>
        {rest}
      </span>
    ))}
  </nav>
);

const ToolbarOne = () => (
  <div className="flex h-[39px] items-center border-b border-[#b9b9b9] bg-linear-to-b from-[#f8f8f8] to-[#ededed]">
    <GripV className="w-[12px] pl-[2px]" />
    <Slot><Icon name="save" /></Slot>
    <Sep className="w-[7px]" />
    <Slot><Icon name="newLayout" /></Slot>
    <Slot><Icon name="duplicate" /></Slot>
    <Slot><Icon name="manager" /></Slot>
    <Slot><Icon name="folder" /></Slot>
    <Slot>
      <Svg>
        {icons.save}
        <rect x="14" y="14" width="10" height="10" rx="1.800" fill="#5a8f5a" />
        <path d="M16.500 21.500l5-5" stroke="#fff" strokeWidth="2" />
      </Svg>
    </Slot>
    <Sep className="w-[7px]" />
    <Slot><Icon name="page" /></Slot>
    <Sep className="w-[7px]" />
    <Slot><Icon name="print" /></Slot>
    <Slot><Icon name="exportImg" /></Slot>
    <Slot><Icon name="exportSvg" /></Slot>
    <Slot><Icon name="exportPdf" /></Slot>
    <Slot><Icon name="undo" /></Slot>
    <Slot><Icon name="redo" /></Slot>
    <GripV className="w-[20px]" />
    <Slot className="w-[27px]"><Icon name="atlas" /></Slot>
    <Slot className="w-[37px]"><Icon name="first" /></Slot>
    <Slot className="w-[32px]"><Icon name="prev" /></Slot>
    <div className="flex h-[30px] w-[84px] shrink-0 rounded-[3px] border border-[#b0b0b0] bg-[#eeeeee] text-[#b0b0b0]">
      <span className="flex w-[63px] items-center border-r border-[#b0b0b0] pl-1">1</span>
      <span className="flex flex-1 items-center justify-center bg-[#f8f8f8]"><Tri size={3.5} color="#b5b5b5" /></span>
    </div>
    <Slot><Icon name="next" /></Slot>
    <Slot><Icon name="last" /></Slot>
    <Slot><Icon name="print" className="opacity-30 grayscale" /></Slot>
    <Slot><Icon name="exportImg" className="opacity-30 grayscale" /></Slot>
    <Slot className="w-[12px]"><Tri size={3.5} color="#b5b5b5" /></Slot>
    <Slot className="w-[34px]"><Icon name="atlasSettings" /></Slot>
  </div>
);

const ToolbarTwo = () => (
  <div className="flex h-[38px] items-center border-b border-[#b4b4b4] bg-linear-to-b from-[#f8f8f8] to-[#ededed]">
    <GripV className="w-[12px] pl-[2px]" />
    <Slot><Icon name="zoomIn" /></Slot>
    <Slot><Icon name="zoomOut" /></Slot>
    <Slot><Icon name="zoomActual" /></Slot>
    <Slot><Icon name="zoomFull" /></Slot>
    <Slot><Icon name="refresh" /></Slot>
    <GripV className="w-[16px] pl-[1px]" />
    <Slot><Icon name="lock" /></Slot>
    <Slot><Icon name="unlock" /></Slot>
    <Slot><Icon name="group" /></Slot>
    <Slot className="w-[34px]"><Icon name="ungroup" /></Slot>
    <Slot><Icon name="raise" /></Slot>
    <Slot><Icon name="align" /></Slot>
    <Slot><Icon name="distribute" /></Slot>
    <Slot><Icon name="resize" /></Slot>
  </div>
);

const SideSlot = ({ children, active }) => (
  <div className="flex h-8 shrink-0 items-center justify-center">
    <div className={"flex h-[31px] w-[32px] items-center justify-center rounded-[3px] " + (active ? "mt-px border border-[#b4b4b4] bg-[#dcdcdc]" : "")}>{children}</div>
  </div>
);

const SideBar = () => (
  <aside className="flex w-[40px] shrink-0 flex-col border-r border-[#b9b9b9] bg-linear-to-r from-[#f8f8f8] to-[#eeeeee]">
    <div className="flex h-[12px] items-end justify-center pb-[3px]">
      <svg width="17" height="5" viewBox="0 0 17 5" shapeRendering="crispEdges">
        <path d="M0 .5h17M0 3.500h17" stroke="#b9b9b9" strokeDasharray="1 2" />
      </svg>
    </div>
    <SideSlot><Icon name="hand" /></SideSlot>
    <SideSlot><Icon name="zoomTool" /></SideSlot>
    <SideSlot active><Icon name="select" /></SideSlot>
    <SideSlot><Svg>{icons.map}{icons.moveArrows}</Svg></SideSlot>
    <SideSlot><Svg>{icons.nodes}{icons.tools}</Svg></SideSlot>
    <SideSlot><Icon name="map" plus /></SideSlot>
    <SideSlot><Icon name="map3d" plus /></SideSlot>
    <SideSlot><Icon name="picture" plus /></SideSlot>
    <SideSlot><Icon name="label" plus /></SideSlot>
    <SideSlot><Icon name="legend" plus /></SideSlot>
    <SideSlot><Icon name="scalebar" plus /></SideSlot>
    <SideSlot><Icon name="north" plus /></SideSlot>
    <SideSlot><Icon name="shape" plus arrow /></SideSlot>
    <SideSlot><Icon name="marker" plus /></SideSlot>
    <SideSlot><Icon name="arrow" plus /></SideSlot>
    <SideSlot><Icon name="nodes" plus arrow /></SideSlot>
    <SideSlot><Icon name="html" plus /></SideSlot>
    <SideSlot><Icon name="table" plus /></SideSlot>
    <SideSlot><Icon name="manual" plus /></SideSlot>
  </aside>
);

const ItemsDock = () => (
  <div className="h-[192px]">
    <div className="flex h-[29px] items-end border-b border-[#b4b4b4]">
      <Tab active className="w-[62px] pr-px">Items</Tab>
      <Tab className="w-[109px]">Undo History</Tab>
    </div>
    <DockTitle className="h-[20px] pt-px">Items</DockTitle>
    <div className="mr-px h-[137px] border border-[#b4b4b4] bg-white">
      <div className="flex h-[21px] items-center border-b border-[#b4b4b4] bg-linear-to-b from-[#fdfdfd] to-[#ececec]">
        <span className="flex h-full w-[32px] items-center border-r border-[#cfcfcf] pl-[2px]"><Eye /></span>
        <span className="flex h-full w-[32px] items-center border-r border-[#cfcfcf] pl-1">
          <svg width="12" height="16" viewBox="0 0 12 16" fill="none">
            <path d="M2.500 8V5a3.500 3.500 0 017 0v3" stroke="#888" strokeWidth="1.800" />
            <rect x="0" y="7.500" width="12" height="7.500" rx="1" fill="#666" />
          </svg>
        </span>
        <span className="pt-px pl-[2px]">Item</span>
      </div>
      <div className="flex h-[18px] items-center pl-[3px]">
        <Check checked />
        <Check className="ml-[18px]" />
        <Icon name="map" size={16} className="ml-[18px]" />
        <span className="-mt-px ml-[6px] font-bold text-black">Map 1</span>
      </div>
    </div>
  </div>
);

const ItemToolbar = () => (
  <div className="flex h-[31px] shrink-0 items-center pb-0.5 pl-[3px]">
    <Slot className="w-[25px]"><Icon name="refresh" size={16} /></Slot>
    <Sep className="w-[8px]" />
    <Slot className="w-[23px]"><PropIcon back /></Slot>
    <Slot className="w-[26px]"><PropIcon /></Slot>
    <Sep className="w-[8px]" />
    <Slot className="w-[23px]"><PropIcon back numbers /></Slot>
    <Slot className="w-[26px]"><PropIcon numbers /></Slot>
    <Sep className="w-[8px]" />
    <Slot className="w-[23px]">
      <Svg size={16}>
        {icons.map}
        <path d="M12 1h6v11l-3-2.500-3 2.500z" fill="#5b87bd" />
        <path d="M17 21h8l-4 4z" fill="#333" />
      </Svg>
    </Slot>
    <Slot className="w-[26px]">
      <Svg size={16}>
        {icons.map}
        <path d="M14 3l4.500 5H16v3h-4V8H9.500zM14 23l3.500-4H16v-3h-4v3h-1.500zM5.500 13.500l4-4v2.500h2v3h-2v2.500zM23 13.500l-4-4v2.500h-2v3h2v2.500z" fill="#4c79b2" />
      </Svg>
    </Slot>
    <Sep className="w-[8px]" />
    <Slot className="w-[23px]">
      <svg width="15" height="9" viewBox="0 0 15 9">
        <path d="M3 .5h11.500v8H3L.5 6V3z" fill="#ffe14d" stroke="#c4a000" />
        <text x="8.500" y="6.500" fontSize="5.500" fontWeight="700" fill="#333" textAnchor="middle" fontFamily="DejaVu Sans">abc</text>
      </svg>
    </Slot>
    <Slot className="w-[27px]">
      <Svg size={15}>
        <rect x="1" y="9" width="15" height="14" fill="#b9cdb9" stroke="#8aa78a" strokeDasharray="2 1" />
        <circle cx="16" cy="8" r="7.500" fill="#b9cdb9" stroke="#a0b8a0" />
        <path d="M9 9h7v6.500a7.500 7.500 0 01-7-6.500z" fill="#5f83ad" />
      </Svg>
    </Slot>
  </div>
);

const EXTENTS = [
  ["X min", "38.626"],
  ["Y min", "8.789"],
  ["X max", "38.920"],
  ["Y max", "9.143"],
];

const Properties = () => (
  <div className="mr-px flex h-[622px] shrink-0 overflow-hidden border border-[#b4b4b4]">
    <div className="flex w-[447px] shrink-0 flex-col overflow-hidden pt-[5px]">
      <Section title="Main Properties" height="h-[147px]">
        <div className="mt-[12px] flex h-[26px] items-center pl-[12px]">
          <span className="w-[89px] shrink-0 pt-px">Scale</span>
          <Field className="h-[25px] w-[272px]">193860</Field>
          <Override className="ml-[9px]" />
        </div>
        <div className="mt-[6px] flex h-[26px] items-center pl-[12px]">
          <span className="w-[89px] shrink-0 whitespace-nowrap">Map rotation</span>
          <div className="flex h-[24px] w-[272px] shrink-0 items-center rounded-[3px] border border-[#aeaeae] bg-white pl-1 text-black">
            <span className="flex-1">0.00 °</span>
            <span className="flex h-full w-[14px] flex-col items-center justify-center gap-px border-l border-[#b6b6b6]">
              <Tri dir="up" size={4} color="#555" />
              <Tri size={4} color="#555" />
            </span>
          </div>
          <Override className="ml-[9px]" />
        </div>
        <div className="mt-[6px] flex h-[26px] items-center pl-[12px]">
          <span className="w-[89px] shrink-0">CRS</span>
          <Combo className="mr-[6px] h-[26px] w-[242px]">Use Project CRS</Combo>
          <SmallButton>
            <Svg size={17}>
              <circle cx="11" cy="11" r="9.500" fill="#b9d3ee" stroke="#888" />
              <path d="M2 11h18M3 6h16M11 1v20M6 2c-3 5-3 12 0 18M16 2c3 5 3 12 0 18" stroke="#777" />
              <rect x="12" y="13" width="11" height="11" rx="1.500" fill="#c4a000" />
              <path d="M15 21l5-5" stroke="#fff" strokeWidth="2" />
            </Svg>
          </SmallButton>
          <Override className="ml-[9px]" />
        </div>
        <div className="mt-[4px] flex h-[26px] items-center gap-[5px] pl-[12px]">
          <Check checked />
          <span>Draw map canvas items</span>
        </div>
      </Section>

      <Section title="Layers" height="h-[114px]" header="h-[26px]">
        <div className="mt-[12px] flex h-[26px] items-center pl-[12px]">
          <Check />
          <span className="ml-[5px] flex-1">Follow map theme</span>
          <Combo className="h-[25px] w-[177px]">(none)</Combo>
          <Override className="mr-[16px] ml-[9px]" />
        </div>
        <div className="mt-[6px] flex h-[26px] items-center pl-[12px]">
          <Check />
          <span className="ml-[5px] flex-1">Lock layers</span>
          <SmallButton>
            <div className="flex items-end">
              <Eye iris="#5580b5" />
              <span className="-mb-px -ml-1"><Tri size={2.5} /></span>
            </div>
          </SmallButton>
          <Override className="mr-[16px] ml-[9px]" />
        </div>
        <div className="mt-[5px] flex h-[26px] items-center gap-[5px] pl-[12px] text-[#bebebe]">
          <Check disabled />
          <span>Lock styles for layers</span>
        </div>
      </Section>

      <Section title="Extents" height="h-[149px]">
        <div className="flex flex-col gap-[7px] pt-[12px]">
          {EXTENTS.map(([name, value]) => (
            <div key={name} className="flex h-[25px] items-center pl-[12px]">
              <span className="w-[48px] shrink-0 pt-px">{name}</span>
              <Field className="h-[25px] w-[313px]">{value}</Field>
              <Override className="ml-[9px]" />
            </div>
          ))}
        </div>
      </Section>

      <div className="mt-[2px] shrink-0">
        <Collapsed title="Temporal Range" check />
        <Collapsed title="Controlled by Atlas" check disabled />
        <Collapsed title="Grids" />
        <Collapsed title="Overviews" />
        <Collapsed title="Position and Size" />
      </div>
    </div>
    <div className="flex flex-1 flex-col border-l border-[#b4b4b4] bg-[#e2e2e2]">
      <div className="flex h-[14px] items-center justify-center border-b border-[#b4b4b4] bg-[#f8f8f8]"><Tri dir="up" size={4} color="#555" /></div>
      <div className="h-[441px] border-b border-[#b4b4b4] bg-linear-to-r from-[#fcfcfc] to-[#f0f0f0]" />
      <div className="flex-1" />
      <div className="flex h-[14px] items-center justify-center border-t border-[#b4b4b4] bg-[#f8f8f8]"><Tri size={4} color="#555" /></div>
    </div>
  </div>
);

const RightPanel = () => (
  <div className="flex w-[463px] shrink-0 flex-col">
    <ItemsDock />
    <div className="-mt-[5px] flex h-[7px] shrink-0 items-center justify-center">
      <svg width="17" height="1" viewBox="0 0 17 1" shapeRendering="crispEdges">
        <path d="M0 .5h17" stroke="#b0b0b0" strokeDasharray="1 2" />
      </svg>
    </div>
    <div className="flex h-[28px] shrink-0 items-end border-b border-[#b4b4b4]">
      <Tab active className="w-[125px] pr-px">Item Properties</Tab>
      <Tab className="w-[58px] pr-px">Atlas</Tab>
      <Tab className="w-[70px] pr-px">Layout</Tab>
      <Tab className="w-[69px]">Guides</Tab>
    </div>
    <DockTitle className="h-[20px] shrink-0 pt-px">Item Properties</DockTitle>
    <div className="flex h-[21px] shrink-0 items-center bg-[#c6c6c6] pl-[6px] font-bold text-black">Map 1</div>
    <ItemToolbar />
    <Properties />
  </div>
);

const StatusBar = () => (
  <footer className="flex h-[30px] items-center justify-end bg-[#eeeeee] pt-px">
    <span className="mr-[57px] pt-px tracking-[-0.060px] whitespace-pre text-black">x: 164.574 mm  y: 194.841 mm  page: 1</span>
    <div className="flex h-[25px] w-[135px] shrink-0 rounded-[3px] border border-[#aeaeae] bg-white text-black">
      <span className="flex flex-1 items-center pl-[3px]">97.9%</span>
      <span className="flex w-[20px] items-center justify-center border-l border-[#b6b6b6] bg-linear-to-b from-[#fcfcfc] to-[#ededed] pr-0.5"><Tri size={4} color="#555" /></span>
    </div>
    <div className="mr-[2px] ml-[7px] flex h-[14px] w-[98px] items-center">
      <span className="h-[5px] w-[8px] rounded-l-sm border border-[#3079b5] bg-[#3a9ce0]" />
      <span className="h-[13px] w-[13px] rounded-[3px] border border-[#b0b0b0] bg-white" />
      <span className="h-[5px] flex-1 rounded-r-sm border border-[#bdbdbd] bg-[#dddddd]" />
    </div>
  </footer>
);

export default function App() {
  return (
    <div className="h-[1082px] w-[1922px] overflow-hidden border-r border-b border-l border-[#8f8f8f] bg-[#eeeeee] font-['DejaVu_Sans',sans-serif] text-[13px] leading-[18px] text-[#1c1c1c]">
      <TitleBar />
      <MenuBar />
      <ToolbarOne />
      <ToolbarTwo />
      <main className="flex h-[914px]">
        <SideBar />
        <div className="flex w-[1411px] shrink-0 flex-col">
          <HRuler />
          <div className="flex">
            <VRuler />
            <Canvas />
          </div>
        </div>
        <div className="flex w-[6px] shrink-0 items-center justify-center pt-[10px]">
          <svg width="1" height="17" viewBox="0 0 1 17" shapeRendering="crispEdges">
            <path d="M.5 0v17" stroke="#b0b0b0" strokeDasharray="1 2" />
          </svg>
        </div>
        <RightPanel />
      </main>
      <StatusBar />
    </div>
  );
}
